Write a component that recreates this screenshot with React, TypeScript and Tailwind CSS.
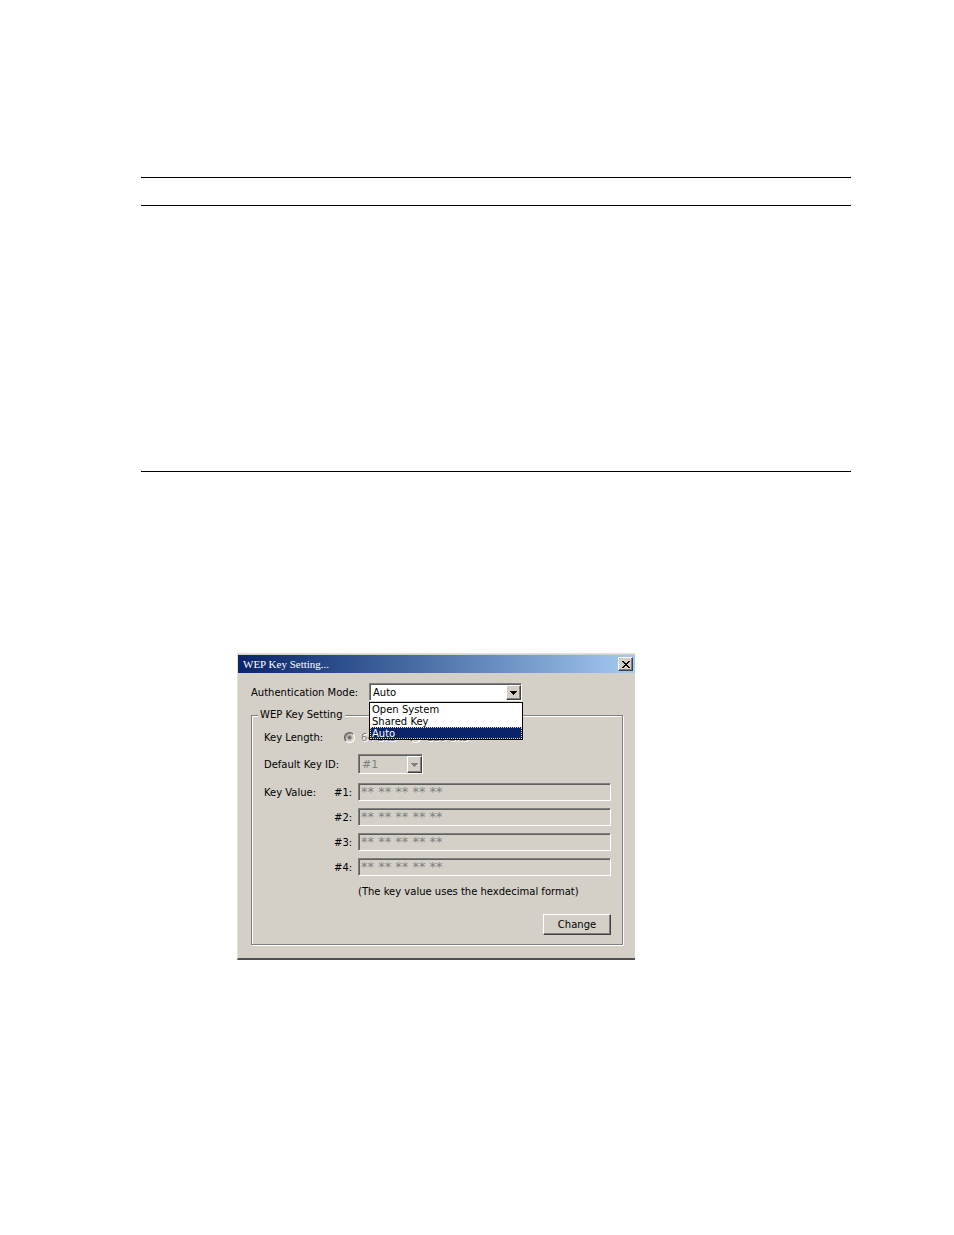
import { useState } from 'react';

const modes = ['Open System', 'Shared Key', 'Auto'];
const keys = ['#1', '#2', '#3', '#4'];

const sunken =
  'border border-t-[#808080] border-l-[#808080] border-r-white border-b-white shadow-[inset_1px_1px_0_#606060]';
const raised =
  'border border-t-white border-l-white border-r-[#404040] border-b-[#404040] shadow-[inset_-1px_-1px_0_#808080]';

function Arrow({ color }: { color: string }) {
  return (
    <svg width="7" height="4" viewBox="0 0 7 4" shapeRendering="crispEdges" aria-hidden="true">
      <path d="M0 0h7v1h-1v1h-1v1h-1v1h-1v-1h-1v-1h-1v-1h-1z" fill={color} />
    </svg>
  );
}

function TitleBar() {
  return (
    <div className="flex h-[18px] items-center justify-between bg-linear-to-r from-[#0a246a] to-[#a6caf0] pr-[2px] pl-[5px]">
      <h1 className="font-['Liberation_Serif',serif] text-[11px] leading-[16px] text-white">WEP Key Setting...</h1>
      <button
        type="button"
        aria-label="Close"
        className={`flex h-[14px] w-[15px] items-center justify-center bg-[#d4d0c8] ${raised}`}
      >
        <svg width="8" height="7" viewBox="0 0 8 7" shapeRendering="crispEdges" aria-hidden="true">
          <path
            d="M0 0h2v1h1v1h2v-1h1v-1h2v1h-1v1h-1v1h-1v1h1v1h1v1h1v1h-2v-1h-1v-1h-2v1h-1v1h-2v-1h1v-1h1v-1h1v-1h-1v-1h-1v-1h-1z"
            fill="#000"
          />
        </svg>
      </button>
    </div>
  );
}

function ModePicker() {
  const [mode, setMode] = useState('Auto');
  return (
    <div className="flex items-center">
      <label htmlFor="mode" className="w-[118px] pt-[2px] whitespace-nowrap">
        Authentication Mode:
      </label>
      <div className="relative w-[153px]">
        <div className={`flex h-[18px] bg-white ${sunken}`}>
          <select
            id="mode"
            value={mode}
            onChange={(e) => setMode(e.target.value)}
            className="min-w-0 flex-1 appearance-none pt-[2px] pl-[3px] leading-[14px] outline-none"
          >
            {modes.map((m) => (
              <option key={m}>{m}</option>
            ))}
          </select>
          <span className={`mt-px flex w-[15px] items-center justify-center bg-[#d4d0c8] ${raised}`}>
            <Arrow color="#000" />
          </span>
        </div>
        <ul
          role="listbox"
          aria-label="Authentication Mode"
          className="absolute top-[19px] left-0 z-10 w-[154px] border border-black bg-white leading-[10px]"
        >
          {modes.map((m) => (
            <li
              key={m}
              role="option"
              aria-selected={m === mode}
              onClick={() => setMode(m)}
              className={
                m === mode
                  ? 'bg-[#0a246a] pt-[2px] pl-[2px] text-white outline-1 -outline-offset-1 outline-dotted outline-[#f5db95]'
                  : 'pt-[2px] pl-[2px]'
              }
            >
              {m}
            </li>
          ))}
        </ul>
      </div>
    </div>
  );
}

function LengthOption({ id, label, checked }: { id: string; label: string; checked: boolean }) {
  return (
    <span className="flex items-center">
      <input
        type="radio"
        id={id}
        name="length"
        disabled
        defaultChecked={checked}
        className="size-[11px] appearance-none rounded-full border border-t-[#606060] border-r-white border-b-white border-l-[#606060] shadow-[inset_1px_1px_0_#808080] checked:bg-[radial-gradient(circle,#707070_1px,transparent_3px)]"
      />
      <label htmlFor={id} className="pt-[2px] pl-[6px] text-[#808080] [text-shadow:1px_1px_0_#fff]">
        {label}
      </label>
    </span>
  );
}

export default function App() {
  return (
    <main className="pt-[177px] pr-[103px] pl-[141px] font-['DejaVu_Sans',sans-serif] text-[10px] leading-[14px] text-black">
      <div className="h-[29px] border-y border-black" />
      <hr className="mt-[265px] border-black" />
      <section className="mt-[181px] ml-24 w-full max-w-[398px] border-t border-b-2 border-l border-t-[#e4e1da] border-b-[#505050] border-l-[#e4e1da] bg-[#d4d0c8] pt-px pb-[13px]">
        <TitleBar />
        <form className="pt-[10px] pr-[12px] pl-[13px]" onSubmit={(e) => e.preventDefault()}>
          <ModePicker />
          <fieldset className="mt-[7px] border border-[#808080] pr-[11px] pb-[9px] pl-[12px] shadow-[1px_1px_0_#fff,inset_1px_1px_0_#fff]">
            <legend className="-ml-[6px] bg-[#d4d0c8] px-[2px]">WEP Key Setting</legend>
            <div className="flex items-center pt-[7px]">
              <span className="w-[80px] pt-[2px]">Key Length:</span>
              <div className="flex gap-[14px]">
                <LengthOption id="len64" label="64 Bits" checked />
                <LengthOption id="len128" label="128 Bits" checked={false} />
              </div>
            </div>
            <div className="flex items-center pt-[9px]">
              <label htmlFor="keyid" className="w-[94px] pt-px whitespace-nowrap">
                Default Key ID:
              </label>
              <div className={`flex h-[20px] w-[65px] ${sunken}`}>
                <select
                  id="keyid"
                  disabled
                  defaultValue="#1"
                  className="min-w-0 flex-1 appearance-none pt-[2px] pl-[3px] text-[11px] text-[#808080] opacity-100"
                >
                  {keys.map((k) => (
                    <option key={k}>{k}</option>
                  ))}
                </select>
                <span className={`mt-px flex w-[15px] items-center justify-center ${raised}`}>
                  <Arrow color="#808080" />
                </span>
              </div>
            </div>
            <div className="flex pt-[9px]">
              <span className="w-[70px] pt-[3px]">Key Value:</span>
              <div className="flex flex-1 flex-col gap-[7px]">
                {keys.map((k) => (
                  <div key={k} className="flex items-center">
                    <label htmlFor={`key${k}`} className="w-[24px] pt-[2px]">
                      {k}:
                    </label>
                    <input
                      id={`key${k}`}
                      disabled
                      defaultValue="** ** ** ** **"
                      className={`h-[18px] min-w-0 flex-1 pb-[2px] pl-[2px] text-[13px] leading-[14px] text-[#808080] ${sunken}`}
                    />
                  </div>
                ))}
              </div>
            </div>
            <p className="pt-[9px] pl-[94px] whitespace-nowrap">(The key value uses the hexdecimal format)</p>
            <div className="flex justify-end pt-[15px]">
              <button type="button" className={`h-[21px] w-[68px] ${raised}`}>
                Change
              </button>
            </div>
          </fieldset>
        </form>
      </section>
    </main>
  );
}
